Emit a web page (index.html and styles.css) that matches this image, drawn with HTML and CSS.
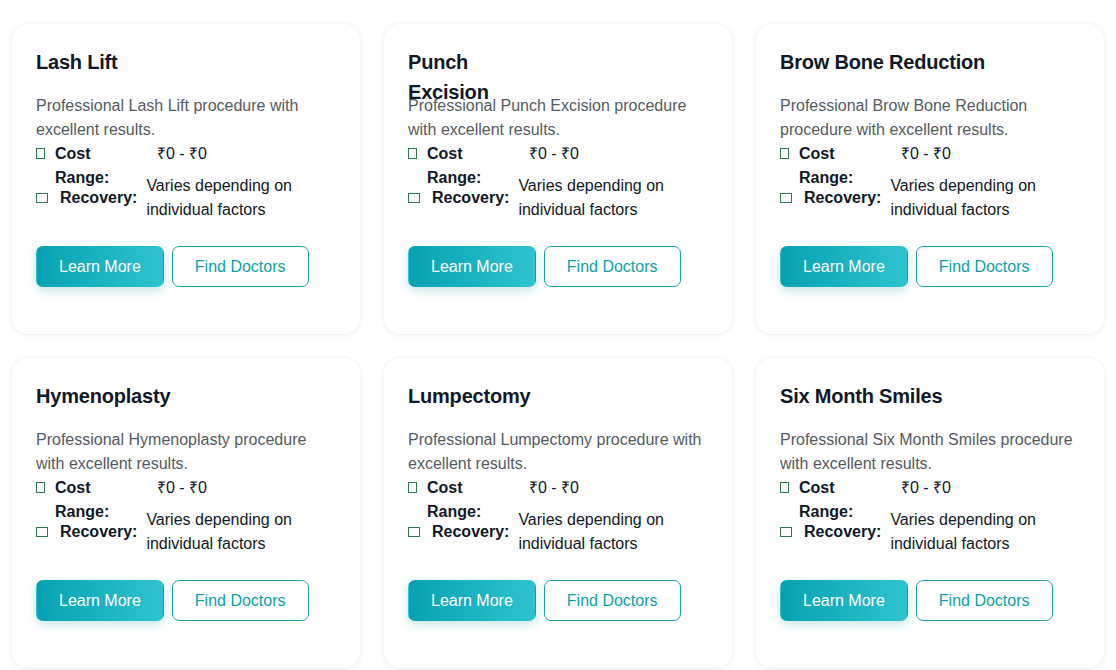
FILE: index.html
```html
<!DOCTYPE html>
<html lang="en">
<head>
<meta charset="utf-8">
<title>Procedures</title>
<link rel="stylesheet" href="styles.css">
</head>
<body>
<main class="grid">
  <article class="card">
    <h3 class="title">Lash Lift</h3>
    <p class="desc">Professional Lash Lift procedure with excellent results.</p>
    <div class="details">
      <div class="row row--cost"><span class="ico ico--tall"></span><span class="label label--cost">Cost Range:</span><span class="value value--cost">₹0 - ₹0</span></div>
      <div class="row row--rec"><span class="ico ico--wide"></span><span class="label">Recovery:</span><span class="value">Varies depending on individual factors</span></div>
    </div>
    <div class="actions"><button class="btn btn--primary">Learn More</button><button class="btn btn--outline">Find Doctors</button></div>
  </article>
  <article class="card">
    <h3 class="title title--narrow">Punch Excision</h3>
    <p class="desc">Professional Punch Excision procedure with excellent results.</p>
    <div class="details">
      <div class="row row--cost"><span class="ico ico--tall"></span><span class="label label--cost">Cost Range:</span><span class="value value--cost">₹0 - ₹0</span></div>
      <div class="row row--rec"><span class="ico ico--wide"></span><span class="label">Recovery:</span><span class="value">Varies depending on individual factors</span></div>
    </div>
    <div class="actions"><button class="btn btn--primary">Learn More</button><button class="btn btn--outline">Find Doctors</button></div>
  </article>
  <article class="card">
    <h3 class="title">Brow Bone Reduction</h3>
    <p class="desc">Professional Brow Bone Reduction procedure with excellent results.</p>
    <div class="details">
      <div class="row row--cost"><span class="ico ico--tall"></span><span class="label label--cost">Cost Range:</span><span class="value value--cost">₹0 - ₹0</span></div>
      <div class="row row--rec"><span class="ico ico--wide"></span><span class="label">Recovery:</span><span class="value">Varies depending on individual factors</span></div>
    </div>
    <div class="actions"><button class="btn btn--primary">Learn More</button><button class="btn btn--outline">Find Doctors</button></div>
  </article>
  <article class="card">
    <h3 class="title">Hymenoplasty</h3>
    <p class="desc">Professional Hymenoplasty procedure with excellent results.</p>
    <div class="details">
      <div class="row row--cost"><span class="ico ico--tall"></span><span class="label label--cost">Cost Range:</span><span class="value value--cost">₹0 - ₹0</span></div>
      <div class="row row--rec"><span class="ico ico--wide"></span><span class="label">Recovery:</span><span class="value">Varies depending on individual factors</span></div>
    </div>
    <div class="actions"><button class="btn btn--primary">Learn More</button><button class="btn btn--outline">Find Doctors</button></div>
  </article>
  <article class="card">
    <h3 class="title">Lumpectomy</h3>
    <p class="desc">Professional Lumpectomy procedure with excellent results.</p>
    <div class="details">
      <div class="row row--cost"><span class="ico ico--tall"></span><span class="label label--cost">Cost Range:</span><span class="value value--cost">₹0 - ₹0</span></div>
      <div class="row row--rec"><span class="ico ico--wide"></span><span class="label">Recovery:</span><span class="value">Varies depending on individual factors</span></div>
    </div>
    <div class="actions"><button class="btn btn--primary">Learn More</button><button class="btn btn--outline">Find Doctors</button></div>
  </article>
  <article class="card">
    <h3 class="title">Six Month Smiles</h3>
    <p class="desc">Professional Six Month Smiles procedure with excellent results.</p>
    <div class="details">
      <div class="row row--cost"><span class="ico ico--tall"></span><span class="label label--cost">Cost Range:</span><span class="value value--cost">₹0 - ₹0</span></div>
      <div class="row row--rec"><span class="ico ico--wide"></span><span class="label">Recovery:</span><span class="value">Varies depending on individual factors</span></div>
    </div>
    <div class="actions"><button class="btn btn--primary">Learn More</button><button class="btn btn--outline">Find Doctors</button></div>
  </article>
</main>
</body>
</html>
```
FILE: styles.css
```css
* { box-sizing: border-box; }
html, body { margin: 0; background: #ffffff; }
body {
  font-family: "Liberation Sans", Arial, Helvetica, sans-serif;
  color: #111827;
}
.grid {
  display: grid;
  grid-template-columns: repeat(3, 348px);
  gap: 24px;
  padding: 24px 12px;
}
.card {
  background: #fff;
  border-radius: 16px;
  box-shadow: 0 1px 6px rgba(0, 0, 0, 0.07), 0 0 0 1px rgba(0, 0, 0, 0.015);
  padding: 24px;
  height: 310px;
  display: flex;
  flex-direction: column;
}
.title {
  margin: -1px 0 17px;
  font-size: 20px;
  line-height: 30px;
  height: 30px;
  font-weight: 700;
  color: #111827;
  letter-spacing: -0.2px;
}
.title--narrow { width: 120px; }
.desc {
  margin: 0;
  font-size: 16px;
  line-height: 24px;
  color: #555b63;
}
.details {
  display: flex;
  flex-direction: column;
  gap: 8px;
}
.row {
  display: flex;
  font-size: 16px;
  line-height: 24px;
  color: #111827;
}
.row--cost { height: 24px; align-items: flex-start; }
.row--rec { align-items: center; }
.ico {
  display: inline-block;
  flex: none;
  border: 1.5px solid #2f7a4d;
}
.ico--tall { width: 9px; height: 11px; margin: 6px 10px 0 0; }
.ico--wide { width: 12px; height: 10px; margin-right: 12px; }
.label { font-weight: 700; flex: none; }
.label--cost { width: 90px; }
.value { margin-left: 9px; }
.value--cost { margin-left: 12px; }
.actions {
  display: flex;
  gap: 8px;
  margin-top: 24px;
}
.btn {
  font-family: inherit;
  font-size: 16px;
  line-height: 19px;
  padding: 10px 22px;
  border-radius: 7px;
  cursor: pointer;
}
.btn--primary {
  border: 1px solid transparent;
  color: #fff;
  background: linear-gradient(90deg, #07a2b1 0%, #2fc3d0 100%);
  box-shadow: 0 4px 10px rgba(10, 150, 160, 0.22);
}
.btn--outline {
  border: 1px solid #17a5b4;
  color: #0f9fae;
  background: #fff;
}
```
